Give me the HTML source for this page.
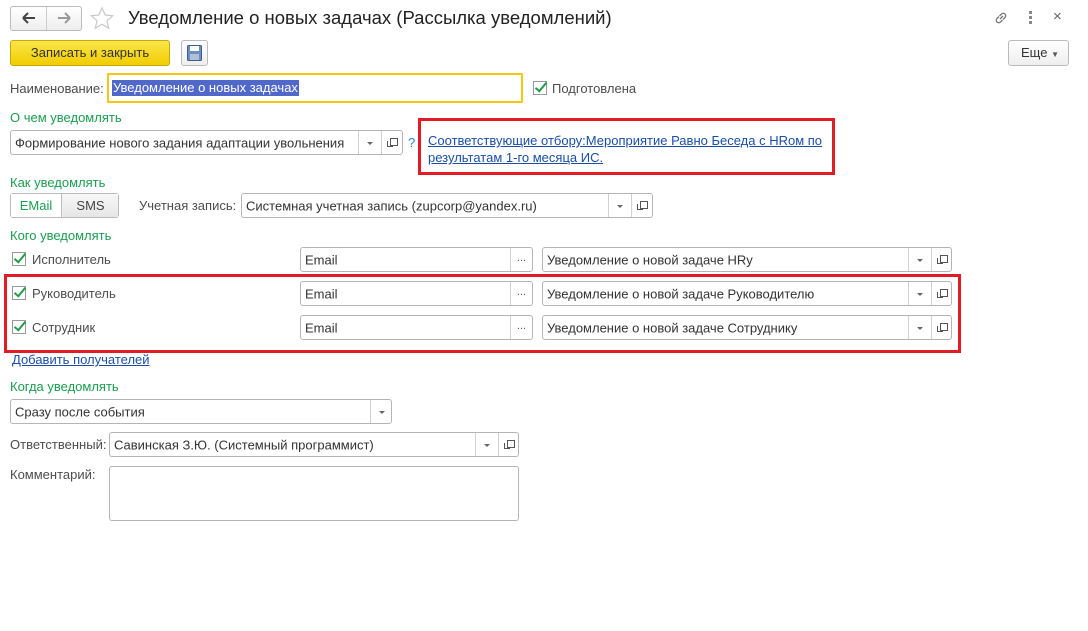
<!DOCTYPE html>
<html><head><meta charset="utf-8"><style>
*{box-sizing:border-box;margin:0;padding:0}
body{width:1088px;height:631px;background:#fff;font-family:"Liberation Sans",Arial,sans-serif;font-size:13px;color:#333;position:relative;overflow:hidden}
.a{position:absolute;white-space:nowrap}
.lbl{color:#4d4d4d}
.grn{color:#1a9e4f}
.box{position:absolute;border:1px solid #b5b5b5;border-radius:3px;background:#fff}
.box span.t{position:absolute;left:4px;top:50%;transform:translateY(-50%);color:#333;white-space:nowrap}
.dd{position:absolute;top:0;bottom:0;border-left:1px solid #d0d0d0;width:22px}
.dd:after{content:"";position:absolute;left:8px;top:50%;margin-top:-1px;border-left:3px solid transparent;border-right:3px solid transparent;border-top:3px solid #666}
.cp{position:absolute;top:0;bottom:0;border-left:1px solid #d0d0d0;width:21px}
.cp:before{content:"";position:absolute;left:8px;top:7px;width:6px;height:6px;border:1px solid #555;background:#fff}
.cp:after{content:"";position:absolute;left:5px;top:10px;width:5px;height:5px;border-left:1px solid #555;border-bottom:1px solid #555}
.dots{position:absolute;top:0;bottom:0;border-left:1px solid #d0d0d0;width:22px;text-align:center;font-size:11px;line-height:20px;color:#555}
.chk{position:absolute;width:14px;height:14px;border:1px solid #999;background:#fff}
.chk:after{content:"";position:absolute;left:4px;top:-2px;width:4px;height:10px;border-right:2.5px solid #1d9e47;border-bottom:2.5px solid #1d9e47;transform:rotate(40deg)}
.red{position:absolute;border:3px solid #e21b24}
a{color:#1a4ea8;text-decoration:underline}
</style></head><body>
<div class="box" style="left:10px;top:6px;width:72px;height:25px;background:linear-gradient(#fff,#eee);border-color:#bbb"></div>
<div class="a" style="left:46px;top:7px;width:1px;height:23px;background:#ccc"></div>
<svg class="a" style="left:22px;top:12px" width="14" height="12"><path d="M1 6h12M1 6l5-5M1 6l5 5" stroke="#444" stroke-width="2" fill="none"/></svg>
<svg class="a" style="left:57px;top:12px" width="14" height="12"><path d="M1 6h12M13 6l-5-5M13 6l-5 5" stroke="#999" stroke-width="2" fill="none"/></svg>
<svg class="a" style="left:90px;top:7px" width="24" height="23"><path d="M12 1l3.2 7 7.5.7-5.7 5 1.7 7.5L12 17.3 5.3 21.2 7 13.7 1.3 8.7 8.8 8z" fill="none" stroke="#c8c8c8" stroke-width="1.2"/></svg>
<div class="a" style="left:128px;top:7px;font-size:18.5px;color:#222">Уведомление о новых задачах (Рассылка уведомлений)</div>
<svg class="a" style="left:993px;top:10px" width="16" height="16"><path d="M7 9l3-3M6 6.5L4 8.5a2.4 2.4 0 003.5 3.5l2-2M10 9.5l2-2A2.4 2.4 0 008.5 4l-2 2" stroke="#777" stroke-width="1.3" fill="none"/></svg>
<div class="a" style="left:1029px;top:11px;width:3px;font-size:0">
<div style="width:3px;height:3px;background:#888;margin-bottom:2px"></div><div style="width:3px;height:3px;background:#888;margin-bottom:2px"></div><div style="width:3px;height:3px;background:#888"></div></div>
<div class="a" style="left:1053px;top:8px;font-size:15px;color:#666">×</div>
<div class="a" style="left:10px;top:40px;width:160px;height:26px;border:1px solid #c9a900;border-radius:3px;background:linear-gradient(#fbe64a,#f1cc00);text-align:center;line-height:24px;color:#333;font-size:13px">Записать и закрыть</div>
<div class="a" style="left:181px;top:40px;width:27px;height:26px;border:1px solid #bbb;border-radius:3px;background:linear-gradient(#fff,#eee)"></div>
<svg class="a" style="left:187px;top:45px" width="15" height="16"><rect x="0.5" y="0.5" width="14" height="15" rx="1" fill="#6b8fc2" stroke="#3f5e8c"/><rect x="3" y="1" width="9" height="5" fill="#fff"/><rect x="3" y="9" width="9" height="6" fill="#b0c0d8"/></svg>
<div class="a" style="left:1008px;top:40px;width:61px;height:26px;border:1px solid #bbb;border-radius:3px;background:linear-gradient(#fff,#eee);line-height:24px;padding-left:12px;color:#333">Еще <span style="font-size:8px;color:#555">▼</span></div>
<div class="a lbl" style="left:10px;top:81px">Наименование:</div>
<div class="a" style="left:107px;top:73px;width:416px;height:30px;border:2px solid #f5c518;background:#fff"></div>
<div class="a" style="left:112px;top:80px;height:16px;background:#4f68c9;color:#fff;line-height:16px;padding:0 1px">Уведомление о новых задачах</div>
<div class="chk" style="left:533px;top:81px"></div>
<div class="a lbl" style="left:552px;top:81px">Подготовлена</div>
<div class="a grn" style="left:10px;top:110px">О чем уведомлять</div>
<div class="box" style="left:10px;top:130px;width:393px;height:25px"><span class="t">Формирование нового задания адаптации увольнения</span><div class="dd" style="left:347px"></div><div class="cp" style="left:370px"></div></div>
<div class="a" style="left:408px;top:135px;color:#2a7fd4">?</div>
<div class="red" style="left:418px;top:118px;width:417px;height:57px"></div>
<div class="a" style="left:428px;top:132px;line-height:17px"><a>Соответствующие отбору:Мероприятие Равно Беседа с HRом по</a><br><a>результатам 1-го месяца ИС.</a></div>
<div class="a grn" style="left:10px;top:175px">Как уведомлять</div>
<div class="a" style="left:10px;top:193px;width:109px;height:25px;border:1px solid #bbb;border-radius:3px;background:#f2f2f2"></div>
<div class="a" style="left:11px;top:194px;width:51px;height:23px;background:#fff;border-right:1px solid #bbb;text-align:center;line-height:23px;color:#1a9e4f">EMail</div>
<div class="a" style="left:63px;top:194px;width:55px;height:23px;text-align:center;line-height:23px;color:#444;background:linear-gradient(#f7f7f7,#e6e6e6)">SMS</div>
<div class="a lbl" style="left:139px;top:198px">Учетная запись:</div>
<div class="box" style="left:241px;top:193px;width:412px;height:25px"><span class="t">Системная учетная запись (zupcorp@yandex.ru)</span><div class="dd" style="left:366px"></div><div class="cp" style="left:389px"></div></div>
<div class="a grn" style="left:10px;top:228px">Кого уведомлять</div>
<div class="chk" style="left:12px;top:252px"></div><div class="a lbl" style="left:32px;top:252px">Исполнитель</div>
<div class="box" style="left:300px;top:247px;width:233px;height:25px"><span class="t">Email</span><div class="dots" style="left:209px">...</div></div>
<div class="box" style="left:542px;top:247px;width:410px;height:25px"><span class="t">Уведомление о новой задаче HRу</span><div class="dd" style="left:365px"></div><div class="cp" style="left:388px"></div></div>
<div class="chk" style="left:12px;top:286px"></div><div class="a lbl" style="left:32px;top:286px">Руководитель</div>
<div class="box" style="left:300px;top:281px;width:233px;height:25px"><span class="t">Email</span><div class="dots" style="left:209px">...</div></div>
<div class="box" style="left:542px;top:281px;width:410px;height:25px"><span class="t">Уведомление о новой задаче Руководителю</span><div class="dd" style="left:365px"></div><div class="cp" style="left:388px"></div></div>
<div class="chk" style="left:12px;top:320px"></div><div class="a lbl" style="left:32px;top:320px">Сотрудник</div>
<div class="box" style="left:300px;top:315px;width:233px;height:25px"><span class="t">Email</span><div class="dots" style="left:209px">...</div></div>
<div class="box" style="left:542px;top:315px;width:410px;height:25px"><span class="t">Уведомление о новой задаче Сотруднику</span><div class="dd" style="left:365px"></div><div class="cp" style="left:388px"></div></div>
<div class="red" style="left:4px;top:274px;width:957px;height:79px"></div>
<div class="a" style="left:12px;top:352px"><a>Добавить получателей</a></div>
<div class="a grn" style="left:10px;top:379px">Когда уведомлять</div>
<div class="box" style="left:10px;top:399px;width:382px;height:25px"><span class="t">Сразу после события</span><div class="dd" style="left:359px"></div></div>
<div class="a lbl" style="left:10px;top:437px">Ответственный:</div>
<div class="box" style="left:109px;top:432px;width:410px;height:25px"><span class="t">Савинская З.Ю. (Системный программист)</span><div class="dd" style="left:365px"></div><div class="cp" style="left:388px"></div></div>
<div class="a lbl" style="left:10px;top:467px">Комментарий:</div>
<div class="box" style="left:109px;top:466px;width:410px;height:55px"></div>
</body></html>
